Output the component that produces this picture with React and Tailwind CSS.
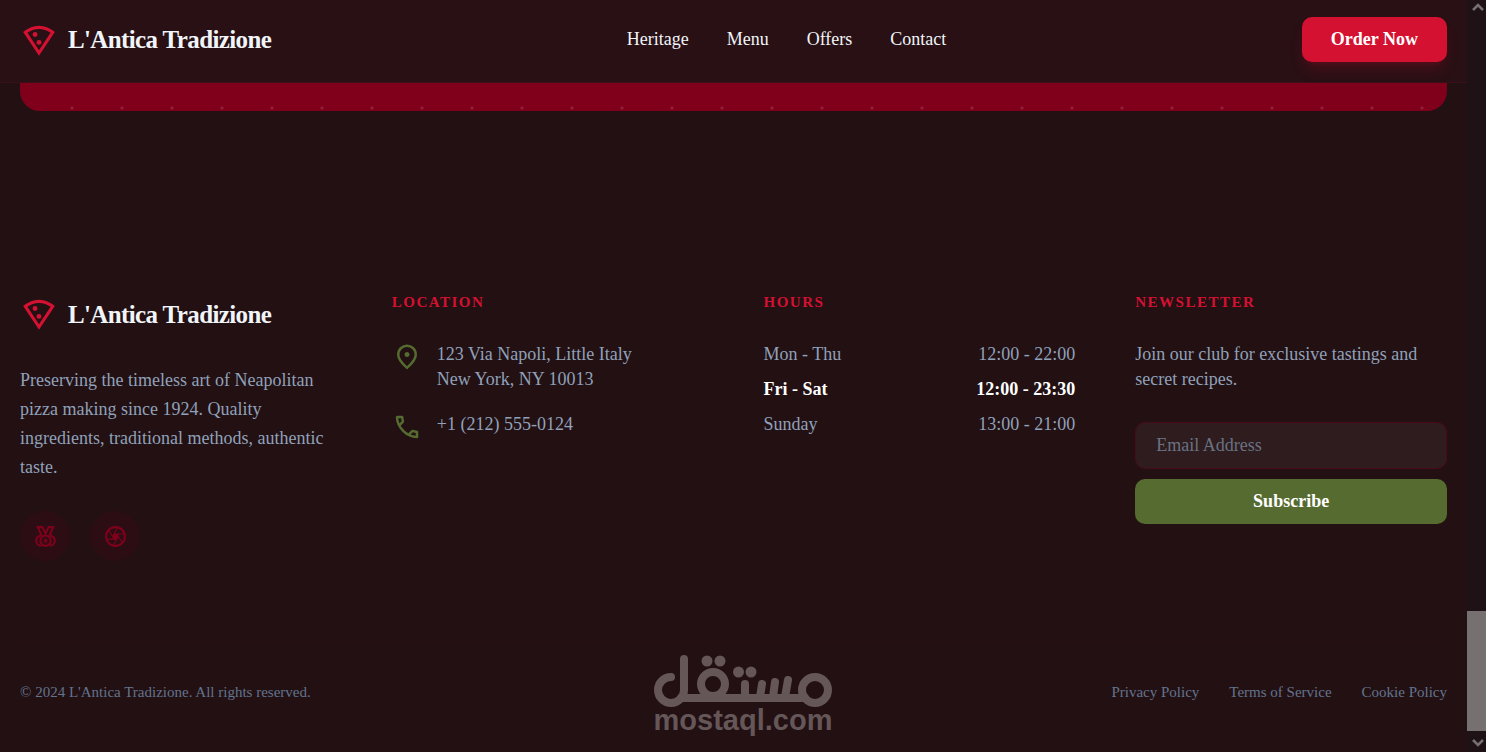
import React from "react";
import { MdOutlineCamera } from "react-icons/md";

const navLinks = ["Heritage", "Menu", "Offers", "Contact"];
const legalLinks = ["Privacy Policy", "Terms of Service", "Cookie Policy"];

const hours = [
  { day: "Mon - Thu", time: "12:00 - 22:00" },
  { day: "Fri - Sat", time: "12:00 - 23:30", highlight: true },
  { day: "Sunday", time: "13:00 - 21:00" },
];

const PizzaIcon = () => (
  <svg viewBox="0 -960 960 960" fill="currentColor" className="size-[38px] shrink-0 text-[#d41131]" aria-hidden="true">
    <path d="M480-80 80-680q85-72 186-116t214-44q113 0 214 43.5T880-680L480-80Zm0-144 292-438q-65-45-139-71.5T480-760q-79 0-152.5 26.5T188-662l292 438Z" />
    <circle cx="380" cy="-620" r="62" />
    <circle cx="480" cy="-420" r="62" />
  </svg>
);

const PinIcon = () => (
  <svg viewBox="0 -960 960 960" fill="currentColor" className="size-[30px] shrink-0 text-[#556b2f]" aria-hidden="true">
    <path d="M480-480q33 0 56.5-23.5T560-560q0-33-23.5-56.5T480-640q-33 0-56.5 23.5T400-560q0 33 23.5 56.5T480-480Zm0 294q122-112 181-203.5T720-552q0-109-69.5-178.5T480-800q-101 0-170.5 69.5T240-552q0 71 59 162.5T480-186Zm0 106Q319-217 239.5-334.5T160-552q0-150 96.5-239T480-880q127 0 223.5 89T800-552q0 100-79.5 217.5T480-80Z" />
  </svg>
);

const PhoneIcon = () => (
  <svg viewBox="0 -960 960 960" fill="currentColor" className="size-[30px] shrink-0 text-[#556b2f]" aria-hidden="true">
    <path d="M798-120q-125 0-247-54.5T329-329Q229-429 174.5-551T120-798q0-18 12-30t30-12h162q14 0 25 9.5t13 22.5l26 140q2 16-1 27t-11 19l-97 98q20 37 47.5 71.5T387-386q31 31 65 57.5t72 48.5l94-94q9-9 23.5-13.5T670-390l138 28q14 4 23 14.5t9 23.5v162q0 18-12 30t-30 12ZM241-600l66-66-17-94h-89q5 41 14 81t26 79Zm358 358q39 17 79.5 27t81.5 13v-88l-94-19-67 67Z" />
  </svg>
);

const MedalIcon = () => (
  <svg viewBox="0 0 24 24" fill="none" stroke="currentColor" strokeWidth="2" className="size-[25px]" aria-hidden="true">
    <circle cx="12" cy="16" r="5" />
    <path d="M8 11.1A4.9 4.9 0 0 0 8 20.9M16 11.1A4.9 4.9 0 0 1 16 20.9" />
    <path d="M8.2 11.2L4.7 3H9l3 6 3-6h4.3L15.8 11.2" />
    <path d="M12 12.8l.8 2.300h2.200l-1.800 1.300.7 2.200-1.900-1.300-1.900 1.300.7-2.200L9 15.100h2.200z" fill="currentColor" stroke="none" />
  </svg>
);

const Brand = () => (
  <div className="flex items-center gap-[10px]">
    <PizzaIcon />
    <span className="text-[25px] leading-[35px] font-bold tracking-tight text-slate-100">L'Antica Tradizione</span>
  </div>
);

const FooterTitle = ({ children }) => (
  <h2 className="mb-[30px] text-[15px] leading-[20px] font-bold uppercase tracking-widest text-[#d41131]">{children}</h2>
);

const Watermark = () => (
  <svg viewBox="0 0 180 84" className="pointer-events-none absolute bottom-[13px] left-1/2 h-[84px] w-[180px] -translate-x-1/2" role="img" aria-label="mostaql.com">
    <g fill="none" stroke="#655658" strokeWidth="8" strokeLinecap="round">
      <path d="M31 4V35A13 13 0 1 1 18 22" />
      <path d="M28 43H152" />
      <circle cx="60" cy="29" r="12" />
      <circle cx="162" cy="35" r="13" />
      <path d="M92 29V42M109 29L107 42M122 27L120 42M135 25L132 42" />
    </g>
    <g fill="#655658">
      <circle cx="54" cy="6" r="5.5" />
      <circle cx="67" cy="6" r="5.5" />
      <circle cx="85.5" cy="17" r="5.5" />
      <circle cx="98" cy="17" r="5.5" />
      <text x="90" y="75" textAnchor="middle" fontSize="29" fontWeight="bold" fontFamily="Liberation Sans, sans-serif">mostaql.com</text>
    </g>
  </svg>
);

const Header = () => (
  <header className="border-b border-[#3a0f17] bg-[#281014] px-5">
    <div className="flex h-[82px] items-center justify-between pb-[3px]">
      <Brand />
      <nav className="flex items-center gap-[38px]">
        {navLinks.map((link) => (
          <a key={link} href="#" className="text-[18px] leading-[27px] font-medium text-slate-100">{link}</a>
        ))}
      </nav>
      <button className="h-[45px] rounded-[10px] bg-[#d41131] px-[29px] text-[18px] font-bold text-white shadow-lg shadow-[#d41131]/20">
        Order Now
      </button>
    </div>
  </header>
);

const Footer = () => (
  <footer className="flex grow flex-col justify-end px-5">
    <div className="grid grid-cols-4 gap-[60px]">
      <div>
        <div className="mt-[3px] mb-[33px]">
          <Brand />
        </div>
        <p className="text-[18px] leading-[29px] text-slate-400">
          Preserving the timeless art of Neapolitan pizza making since 1924. Quality ingredients, traditional methods, authentic taste.
        </p>
        <div className="mt-[29px] flex gap-5 text-[#80001c]">
          <a href="#" aria-label="Awards" className="flex size-[50px] items-center justify-center rounded-full bg-[#2d0d14]">
            <MedalIcon />
          </a>
          <a href="#" aria-label="Gallery" className="flex size-[50px] items-center justify-center rounded-full bg-[#2d0d14]">
            <MdOutlineCamera className="size-[25px]" />
          </a>
        </div>
      </div>

      <div>
        <FooterTitle>Location</FooterTitle>
        <ul className="flex flex-col gap-5 text-[18px] leading-[25px] text-slate-400">
          <li className="flex items-start gap-[15px]">
            <PinIcon />
            <span>123 Via Napoli, Little Italy<br />New York, NY 10013</span>
          </li>
          <li className="flex items-start gap-[15px]">
            <PhoneIcon />
            <span>+1 (212) 555-0124</span>
          </li>
        </ul>
      </div>

      <div>
        <FooterTitle>Hours</FooterTitle>
        <ul className="flex flex-col gap-[10px] text-[18px] leading-[25px] text-slate-400">
          {hours.map((row) => (
            <li key={row.day} className={row.highlight ? "flex justify-between font-bold text-white" : "flex justify-between"}>
              <span>{row.day}</span>
              <span>{row.time}</span>
            </li>
          ))}
        </ul>
      </div>

      <div>
        <FooterTitle>Newsletter</FooterTitle>
        <p className="mb-[30px] text-[18px] leading-[25px] text-slate-400">
          Join our club for exclusive tastings and secret recipes.
        </p>
        <form className="flex flex-col gap-[10px]">
          <input
            type="email"
            aria-label="Email Address"
            placeholder="Email Address"
            className="h-[47px] w-full rounded-[10px] border border-[#490b18] bg-[#2e1c1f] px-5 text-[18px] text-white placeholder:text-gray-500"
          />
          <button type="button" className="h-[45px] w-full rounded-[10px] bg-[#556b2f] text-[18px] font-bold text-white">
            Subscribe
          </button>
        </form>
      </div>
    </div>

    <div className="mt-20 flex items-center justify-between border-t border-[#290f14] pt-10 pb-[50px] text-[15px] leading-[20px] text-slate-500">
      <p>© 2024 L'Antica Tradizione. All rights reserved.</p>
      <div className="flex gap-[30px]">
        {legalLinks.map((link) => (
          <a key={link} href="#">{link}</a>
        ))}
      </div>
    </div>
  </footer>
);

const Scrollbar = () => (
  <div className="flex w-[19px] shrink-0 flex-col items-center justify-between bg-[#1f1217] text-[#777071]" aria-hidden="true">
    <svg viewBox="0 0 19 20" className="h-5 w-[19px]" fill="none" stroke="currentColor" strokeWidth="2.5">
      <path d="M6 10l5-5 5 5" />
    </svg>
    <div className="flex w-full flex-col">
      <div className="h-[120px] bg-[#777071]"></div>
      <svg viewBox="0 0 19 21" className="h-[21px] w-[19px]" fill="none" stroke="currentColor" strokeWidth="2.5">
        <path d="M6 9l5 5 5-5" />
      </svg>
    </div>
  </div>
);

const App = () => {
  return (
    <div className="relative flex min-h-screen bg-[#221013] font-['Liberation_Serif',serif]">
      <div className="flex min-w-0 grow flex-col">
        <Header />
        <div className="px-5">
          <div className="h-7 rounded-b-[20px] bg-[#80001c] bg-[radial-gradient(circle,#94203a_1px,transparent_2px)] bg-[size:50px_50px] bg-[position:27px_0px]"></div>
        </div>
        <Footer />
      </div>
      <Scrollbar />
      <Watermark />
    </div>
  );
};

export default App;
